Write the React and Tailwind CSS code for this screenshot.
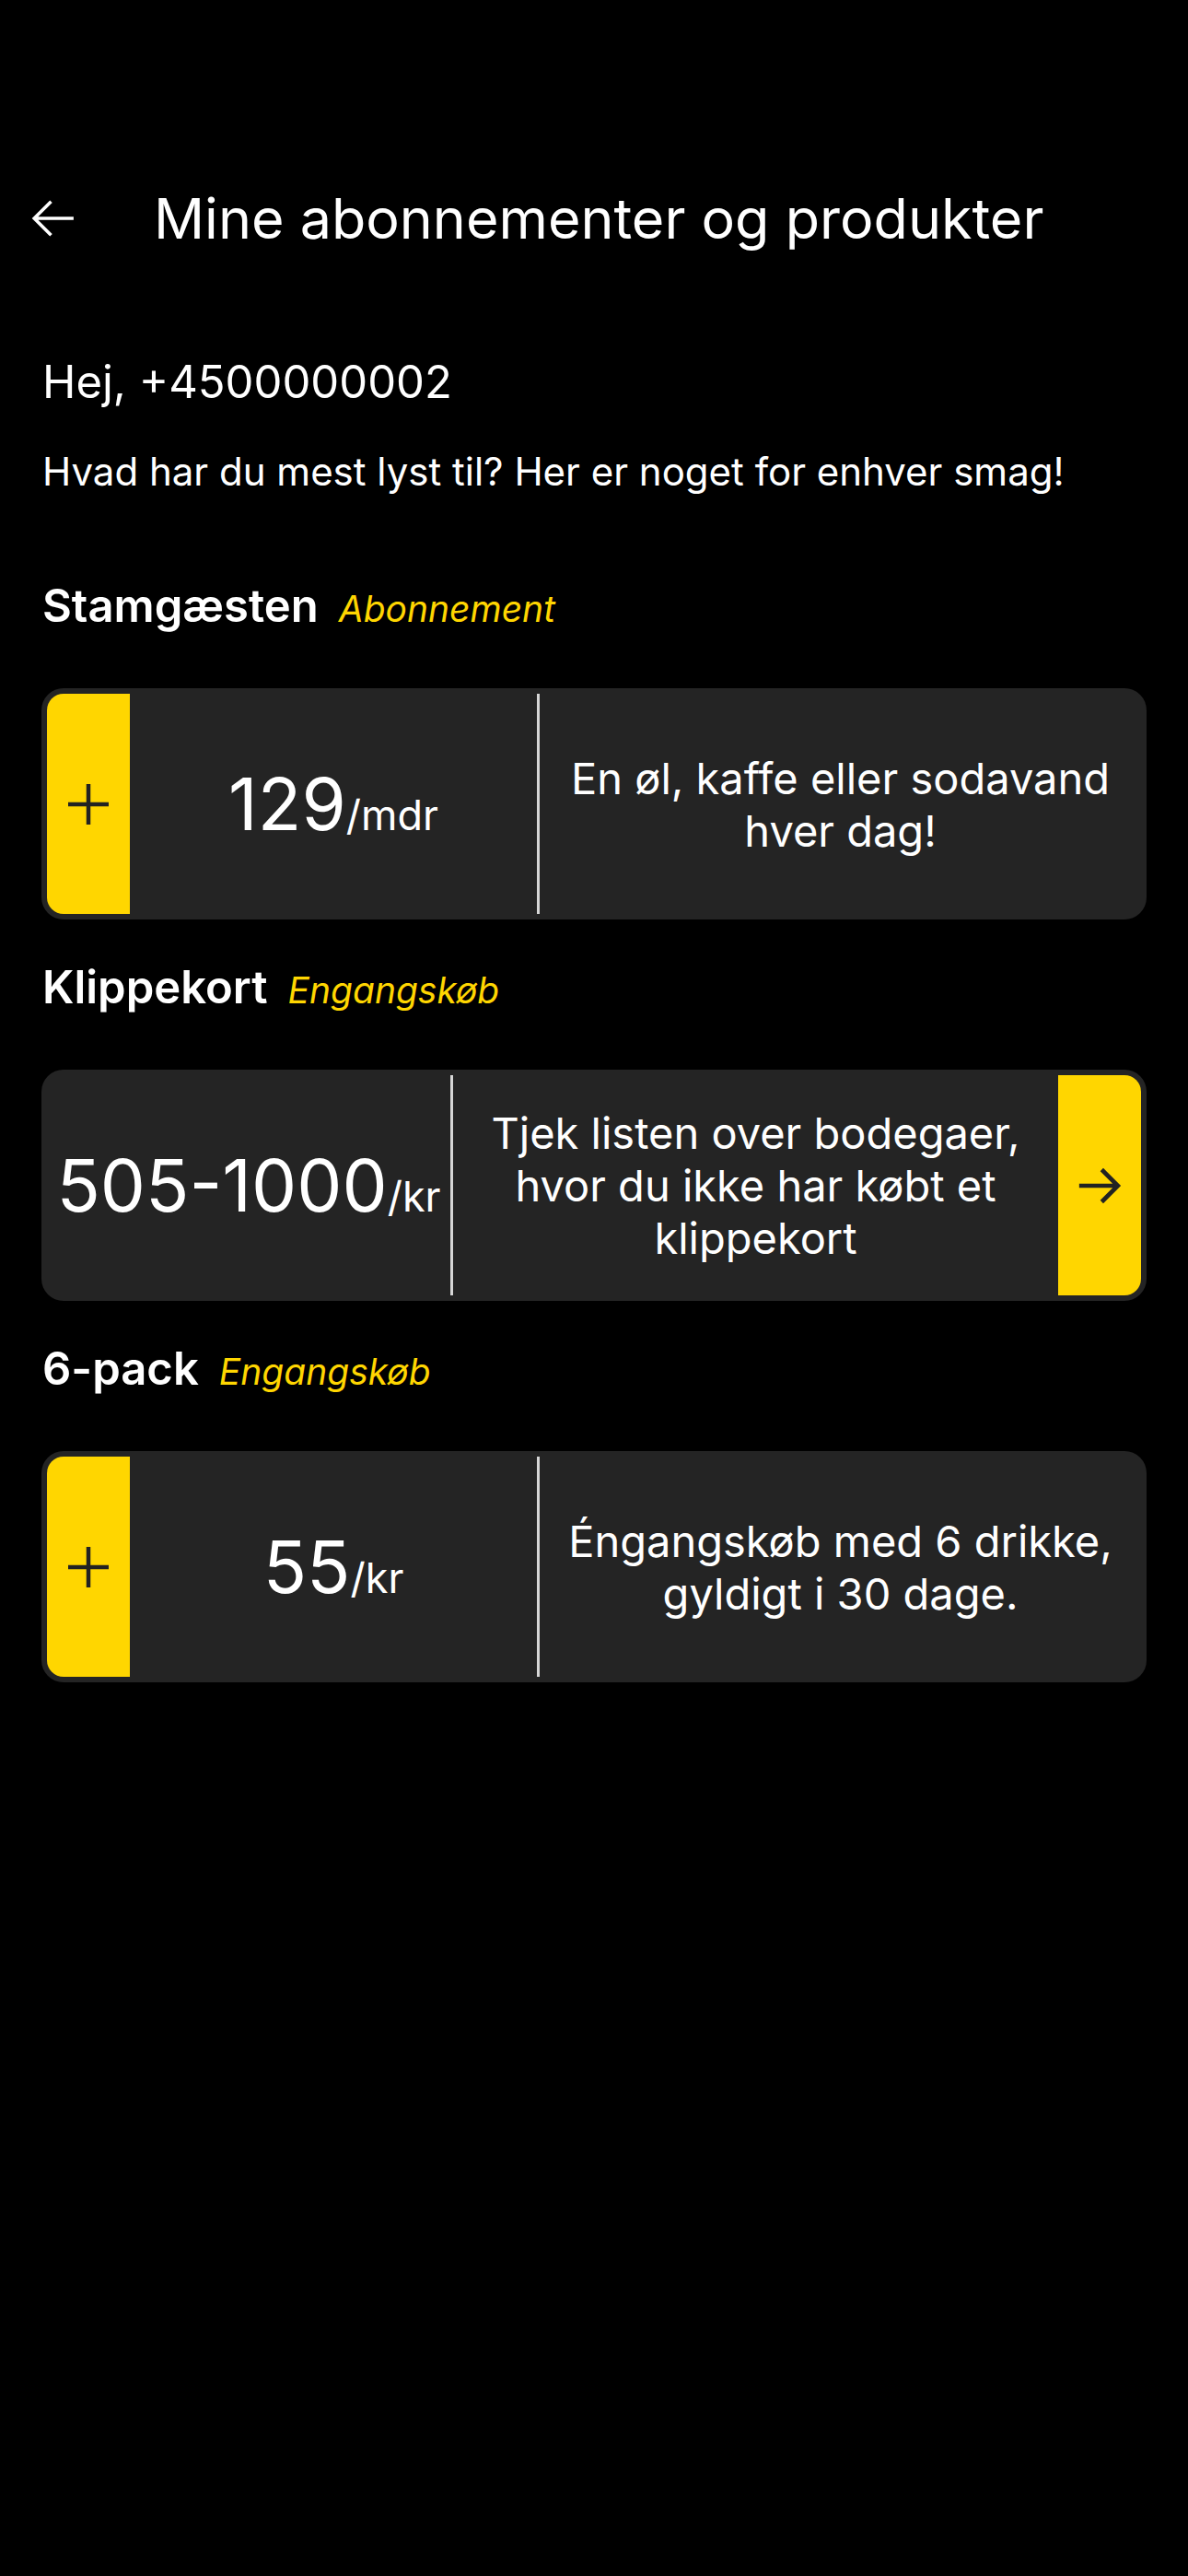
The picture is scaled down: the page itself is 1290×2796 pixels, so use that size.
import React from "react";

const FONT = { fontFamily: "Inter, 'Noto Sans', 'Liberation Sans', sans-serif" };

function Plus() {
  return (
    <svg width="46" height="46" viewBox="0 0 46 46" fill="none">
      <path d="M23 1V45M1 23H45" stroke="#222222" strokeWidth="4.5" />
    </svg>
  );
}

function ArrowRight() {
  return (
    <svg width="56" height="56" viewBox="0 0 24 24" fill="none" stroke="#222222" strokeWidth="2" strokeLinecap="butt" strokeLinejoin="miter">
      <path d="M2.5 12h18M13 4.5l7.5 7.5-7.5 7.5" />
    </svg>
  );
}

function ArrowLeft() {
  return (
    <svg width="50" height="50" viewBox="0 0 24 24" fill="none" stroke="#ffffff" strokeWidth="1.7" strokeLinecap="butt" strokeLinejoin="miter">
      <path d="M22.5 12H1.8M10.8 3.2L2 12l8.8 8.8" />
    </svg>
  );
}

function Heading({ title, tag }) {
  return (
    <div className="flex items-baseline gap-[22px] h-[60px] leading-[60px]">
      <span className="text-[49px] font-semibold text-white">{title}</span>
      <span className="text-[39px] italic text-[#FFD600]">{tag}</span>
    </div>
  );
}

function Price({ big, small }) {
  return (
    <div className="flex items-baseline">
      <span className="text-[78px] leading-none font-normal">{big}</span>
      <span className="text-[45px] leading-none">/{small}</span>
    </div>
  );
}

export default function App() {
  return (
    <div className="min-h-[2796px] bg-black text-white" style={FONT}>
      <div className="pt-[190px]">
        <div className="h-[94px] flex items-center pl-[33px]">
          <ArrowLeft />
          <span className="ml-[84px] text-[61px] font-normal leading-none">Mine abonnementer og produkter</span>
        </div>
      </div>

      <div className="px-[45px]">
        <div className="mt-[101px] h-[60px] leading-[60px] text-[49px] pl-[1px]">Hej, +4500000002</div>
        <div className="mt-[42px] h-[50px] leading-[50px] text-[42px] pl-[1px]">Hvad har du mest lyst til? Her er noget for enhver smag!</div>

        <div className="mt-[91px] pl-[1px]">
          <Heading title="Stamgæsten" tag="Abonnement" />
        </div>
        <div className="mt-[59px] h-[251px] rounded-[24px] bg-[#242424] p-[6px] flex">
          <div className="w-[90px] rounded-l-[18px] bg-[#FFD600] flex items-center justify-center">
            <Plus />
          </div>
          <div className="w-[442px] flex items-center justify-center">
            <Price big="129" small="mdr" />
          </div>
          <div className="w-[3px] bg-[#d6d6d6]" />
          <div className="flex-1 flex items-center justify-center text-center text-[47px] leading-[57px]">
            <p>En øl, kaffe eller sodavand<br />hver dag!</p>
          </div>
        </div>

        <div className="mt-[44px] pl-[1px]">
          <Heading title="Klippekort" tag="Engangskøb" />
        </div>
        <div className="mt-[59px] h-[251px] rounded-[24px] bg-[#242424] p-[6px] flex">
          <div className="w-[438px] flex items-center justify-center">
            <Price big="505-1000" small="kr" />
          </div>
          <div className="w-[3px] bg-[#d6d6d6]" />
          <div className="flex-1 flex items-center justify-center text-center text-[47px] leading-[57px]">
            <p>Tjek listen over bodegaer,<br />hvor du ikke har købt et<br />klippekort</p>
          </div>
          <div className="w-[90px] rounded-r-[18px] bg-[#FFD600] flex items-center justify-center">
            <ArrowRight />
          </div>
        </div>

        <div className="mt-[44px] pl-[1px]">
          <Heading title="6-pack" tag="Engangskøb" />
        </div>
        <div className="mt-[59px] h-[251px] rounded-[24px] bg-[#242424] p-[6px] flex">
          <div className="w-[90px] rounded-l-[18px] bg-[#FFD600] flex items-center justify-center">
            <Plus />
          </div>
          <div className="w-[442px] flex items-center justify-center">
            <Price big="55" small="kr" />
          </div>
          <div className="w-[3px] bg-[#d6d6d6]" />
          <div className="flex-1 flex items-center justify-center text-center text-[47px] leading-[57px]">
            <p>Éngangskøb med 6 drikke,<br />gyldigt i 30 dage.</p>
          </div>
        </div>
      </div>
    </div>
  );
}
